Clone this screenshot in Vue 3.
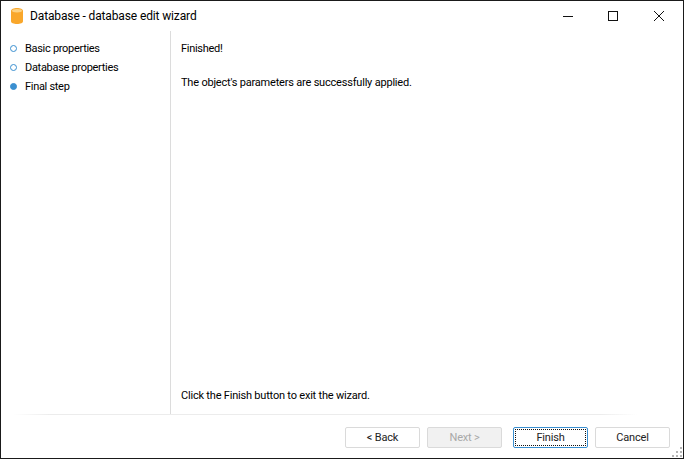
<script setup>
const steps = [
  { label: 'Basic properties', done: false },
  { label: 'Database properties', done: false },
  { label: 'Final step', done: true },
]
</script>

<template>
  <div class="window">
    <header class="titlebar">
      <svg class="app-icon" width="12" height="16" viewBox="0 0 12 16">
        <path d="M0 2.8C0 1.1 2.7 0 6 0S12 1.1 12 2.8V13.2C12 14.9 9.3 16 6 16S0 14.9 0 13.2Z" fill="#f9a72b" />
        <ellipse cx="6" cy="2.8" rx="5" ry="1.7" fill="#fcd283" />
      </svg>
      <span class="title">Database - database edit wizard</span>
      <div class="controls">
        <svg width="46" height="30" viewBox="0 0 46 30"><path d="M19 15.5H29" stroke="#111" fill="none" /></svg>
        <svg width="46" height="30" viewBox="0 0 46 30"><rect x="18.5" y="10.5" width="9" height="9" stroke="#111" fill="none" /></svg>
        <svg width="46" height="30" viewBox="0 0 46 30"><path d="M18 10L28 20M28 10L18 20" stroke="#111" fill="none" /></svg>
      </div>
    </header>

    <div class="body">
      <nav class="sidebar">
        <div v-for="s in steps" :key="s.label" class="step">
          <span class="dot" :class="{ filled: s.done }"></span>
          <span>{{ s.label }}</span>
        </div>
      </nav>
      <main class="content">
        <p class="finished">Finished!</p>
        <p class="applied">The object's parameters are successfully applied.</p>
        <p class="hint">Click the Finish button to exit the wizard.</p>
      </main>
    </div>

    <div class="separator"></div>

    <footer class="footer">
      <button class="btn">&lt; Back</button>
      <button class="btn disabled">Next &gt;</button>
      <button class="btn default"><span class="focus">Finish</span></button>
      <button class="btn">Cancel</button>
      <svg class="grip" width="11" height="11" viewBox="0 0 11 11" fill="#b5b5b5">
        <rect x="8" y="0" width="2" height="2" />
        <rect x="4" y="4" width="2" height="2" /><rect x="8" y="4" width="2" height="2" />
        <rect x="0" y="8" width="2" height="2" /><rect x="4" y="8" width="2" height="2" /><rect x="8" y="8" width="2" height="2" />
      </svg>
    </footer>
  </div>
</template>

<style>
html, body { margin: 0; background: #fff; }
</style>

<style scoped>
.window {
  width: 684px;
  height: 459px;
  box-sizing: border-box;
  border: 1px solid #1a1a1a;
  background: #fff;
  display: flex;
  flex-direction: column;
  font: 11px Roboto, "Liberation Sans", Arial, sans-serif;
  color: #000;
  position: relative;
}
.titlebar {
  height: 30px;
  display: flex;
  align-items: center;
  padding-left: 10px;
  flex: none;
}
.app-icon { margin: -1px 7px 0 0; }
.title { font-size: 12px; letter-spacing: -0.13px; }
.controls { margin-left: auto; display: flex; margin-right: 1px; }
.controls svg { display: block; }
.body { flex: 1; display: flex; min-height: 0; }
.sidebar {
  width: 169px;
  border-right: 1px solid #dcdcdc;
  padding-top: 8px;
  flex: none;
  letter-spacing: -0.3px;
}
.step {
  height: 19px;
  display: flex;
  align-items: center;
  padding-left: 9px;
  gap: 8px;
}
.dot {
  width: 7px;
  height: 7px;
  box-sizing: border-box;
  border-radius: 50%;
  border: 1.5px solid #3a8fd0;
}
.dot.filled { background: #3a8fd0; }
.content {
  flex: 1;
  display: flex;
  flex-direction: column;
  padding: 0 0 11px 10px;
  letter-spacing: -0.2px;
}
.content p { margin: 0; line-height: 14px; }
.finished { margin-top: 11px !important; letter-spacing: -0.3px; }
.applied { margin-top: 20px !important; }
.hint { margin-top: auto !important; }
.separator {
  height: 1px;
  margin: 0 46px 0 12px;
  flex: none;
  background: linear-gradient(to right, #fff, #ececec 6%, #ececec 94%, #fff);
}
.footer {
  height: 43px;
  box-sizing: border-box;
  flex: none;
  display: flex;
  align-items: flex-start;
  padding: 12px 13px 0 344px;
  position: relative;
}
.btn {
  width: 75px;
  height: 21px;
  box-sizing: border-box;
  padding: 0;
  border: 1px solid #dadada;
  border-radius: 2px;
  background: #fff;
  font: 11px Roboto, "Liberation Sans", Arial, sans-serif;
  letter-spacing: -0.2px;
  color: #222;
  margin-right: 7px;
}
.btn:last-of-type { margin-right: 0; }
.btn.disabled { background: #f1f1f1; color: #a8a8a8; margin-right: 11px; }
.btn.default { border-color: #3a8fd0; padding: 1px; }
.focus {
  display: flex;
  align-items: center;
  justify-content: center;
  height: 100%;
  box-sizing: border-box;
  border: 1px dotted #111;
}
.grip { position: absolute; right: 0; bottom: 0; }
</style>
